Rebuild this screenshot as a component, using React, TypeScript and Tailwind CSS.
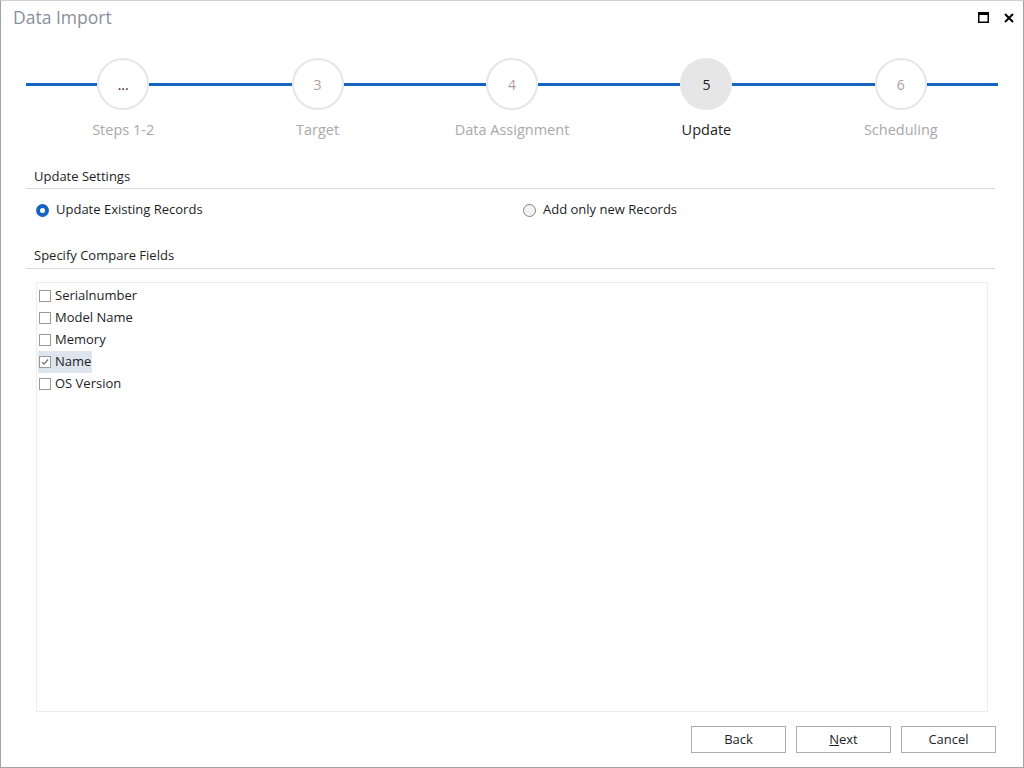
import React from "react";

const steps = [
  { n: "...", label: "Steps 1-2", active: false, dots: true },
  { n: "3", label: "Target", active: false },
  { n: "4", label: "Data Assignment", active: false },
  { n: "5", label: "Update", active: true },
  { n: "6", label: "Scheduling", active: false },
];

const fields = [
  { name: "Serialnumber", checked: false },
  { name: "Model Name", checked: false },
  { name: "Memory", checked: false },
  { name: "Name", checked: true },
  { name: "OS Version", checked: false },
];

function Checkbox({ checked }: { checked: boolean }) {
  return (
    <div className="w-[12px] h-[12px] border border-[#9a9a9a] bg-white flex items-center justify-center shrink-0">
      {checked && (
        <svg width="8" height="8" viewBox="0 0 8 8">
          <path d="M1 4.2 L3 6.2 L7 1.5" fill="none" stroke="#6e6e6e" strokeWidth="1.2" />
        </svg>
      )}
    </div>
  );
}

export default function App() {
  return (
    <div
      className="w-[1024px] h-[768px] bg-white flex flex-col border-l border-r border-b border-t border-l-[#a3a3a3] border-r-[#a3a3a3] border-b-[#a3a3a3] border-t-[#d0d0d0] text-[#1e1e1e]"
      style={{ fontFamily: '"Open Sans", "Noto Sans", sans-serif' }}
    >
      {/* Title bar */}
      <div className="h-[33px] flex items-center justify-between shrink-0">
        <div className="pl-[12px] text-[17.5px] text-[#8a8f99] leading-none">Data Import</div>
        <div className="flex items-center gap-[15px] pr-[9px]">
          <svg width="11" height="11" viewBox="0 0 11 11">
            <rect x="0.75" y="0.75" width="9.5" height="9.5" fill="none" stroke="#000" strokeWidth="1.5" />
            <rect x="0" y="0" width="11" height="3" fill="#000" />
          </svg>
          <svg width="10" height="10" viewBox="0 0 10 10">
            <path d="M1 1 L9 9 M9 1 L1 9" stroke="#000" strokeWidth="2" />
          </svg>
        </div>
      </div>

      {/* Stepper */}
      <div className="mt-[24px] flex px-[25px] shrink-0">
        {steps.map((s, i) => (
          <div key={i} className="flex-1 flex flex-col items-center">
            <div className="w-full flex items-center">
              <div className="flex-1 h-[3px] bg-[#1565c0]" />
              <div
                className={
                  "w-[52px] h-[52px] rounded-full flex items-center justify-center text-[14px] shrink-0 " +
                  (s.active
                    ? "bg-[#e6e6e6] text-[#1e1e1e]"
                    : "bg-white border-2 border-[#e6e6e6] " + (s.dots ? "text-[#3a2020]" : "text-[#ad9f9f]"))
                }
              >
                {s.n}
              </div>
              <div className="flex-1 h-[3px] bg-[#1565c0]" />
            </div>
            <div
              className={
                "mt-[10px] text-[14.5px] leading-[20px] " + (s.active ? "text-[#1e1e1e]" : "text-[#a9a9a9]")
              }
            >
              {s.label}
            </div>
          </div>
        ))}
      </div>

      {/* Update settings */}
      <div className="mt-[27px] ml-[25px] mr-[28px] pl-[8px] pb-[3px] border-b border-[#d9d9d9] text-[13px] leading-[18px]">
        Update Settings
      </div>
      <div className="mt-[11px] ml-[35px] flex items-center h-[20px] text-[13px]">
        <div className="w-[487px] flex items-center gap-[7px]">
          <div className="w-[13px] h-[13px] rounded-full bg-[#1565c0] flex items-center justify-center">
            <div className="w-[5px] h-[5px] rounded-full bg-white" />
          </div>
          <span>Update Existing Records</span>
        </div>
        <div className="flex items-center gap-[7px]">
          <div className="w-[13px] h-[13px] rounded-full border border-[#858585] bg-[#f3f3f3]" />
          <span>Add only new Records</span>
        </div>
      </div>

      <div className="mt-[26px] ml-[25px] mr-[28px] pl-[8px] pb-[4px] border-b border-[#d9d9d9] text-[13px] leading-[18px]">
        Specify Compare Fields
      </div>

      {/* List */}
      <div className="mt-[13px] ml-[35px] mr-[35px] h-[430px] border border-[#ececec] px-[1px] pt-[2px] text-[13px]">
        {fields.map((f) => (
          <div key={f.name} className="h-[22px] flex items-center">
            <div className={"flex items-center h-[22px] gap-[4px] pl-[1px] pr-[1px] " + (f.checked ? "bg-[#dde5ef]" : "")}>
              <Checkbox checked={f.checked} />
              <span>{f.name}</span>
            </div>
          </div>
        ))}
      </div>

      {/* Buttons */}
      <div className="mt-[14px] flex justify-end gap-[10px] pr-[27px] text-[13px]">
        <button className="w-[95px] h-[27px] border border-[#adadad] bg-white">Back</button>
        <button className="w-[95px] h-[27px] border border-[#adadad] bg-white">
          <span className="underline">N</span>ext
        </button>
        <button className="w-[95px] h-[27px] border border-[#adadad] bg-white">Cancel</button>
      </div>
    </div>
  );
}
